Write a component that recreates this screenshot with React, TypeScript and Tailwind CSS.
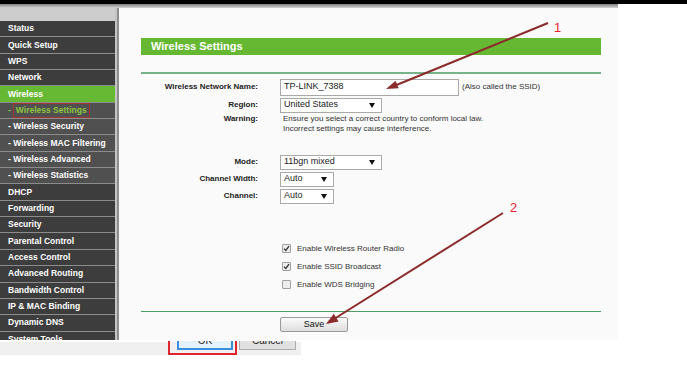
import React from 'react';

type NavKind = 'main' | 'sub' | 'active' | 'current';

const navItems: { label: string; kind: NavKind }[] = [
    { label: 'Status', kind: 'main' },
    { label: 'Quick Setup', kind: 'main' },
    { label: 'WPS', kind: 'main' },
    { label: 'Network', kind: 'main' },
    { label: 'Wireless', kind: 'active' },
    { label: 'Wireless Settings', kind: 'current' },
    { label: '- Wireless Security', kind: 'sub' },
    { label: '- Wireless MAC Filtering', kind: 'sub' },
    { label: '- Wireless Advanced', kind: 'sub' },
    { label: '- Wireless Statistics', kind: 'sub' },
    { label: 'DHCP', kind: 'main' },
    { label: 'Forwarding', kind: 'main' },
    { label: 'Security', kind: 'main' },
    { label: 'Parental Control', kind: 'main' },
    { label: 'Access Control', kind: 'main' },
    { label: 'Advanced Routing', kind: 'main' },
    { label: 'Bandwidth Control', kind: 'main' },
    { label: 'IP & MAC Binding', kind: 'main' },
    { label: 'Dynamic DNS', kind: 'main' },
    { label: 'System Tools', kind: 'main' },
];

const rowBg: Record<NavKind, string> = {
    main: 'bg-[#3d3d3d]',
    sub: 'bg-[#505050]',
    active: 'bg-[#67b934]',
    current: 'bg-[#505050]',
};

// Fake select box (native select renders differently in headless chrome)
const SelectBox = ({ value, width }: { value: string; width: string }) => (
    <div className={`${width} h-[15px] bg-white border border-[#a9a9a9] flex items-center justify-between pl-[3px] pr-[6px]`}>
        <span className="text-[9px] text-[#222]">{value}</span>
        <svg width="6" height="5" viewBox="0 0 6 5">
            <polygon points="0,0 6,0 3,5" fill="#111" />
        </svg>
    </div>
);

const Checkbox = ({ checked }: { checked: boolean }) => (
    <div className="w-[9px] h-[9px] border border-[#a0a0a0] bg-[#ececec] rounded-[1px] flex items-center justify-center">
        {checked && (
            <svg width="7" height="7" viewBox="0 0 7 7">
                <path d="M1 3.6 L2.8 5.4 L6 1.2" stroke="#333" strokeWidth="1.3" fill="none" />
            </svg>
        )}
    </div>
);

const FormRow = ({ label, height, children }: { label: string; height: string; children: React.ReactNode }) => (
    <div className={`flex items-center ${height}`}>
        <div className="w-[117px] text-right text-[8px] font-bold text-[#222]">{label}</div>
        <div className="ml-[22px] flex items-center">{children}</div>
    </div>
);

export default function App() {
    return (
        <div className="relative w-[687px] h-[390px] overflow-hidden bg-white font-['Liberation_Sans',Arial,sans-serif]">
            {/* Top bars */}
            <div className="h-[4px] bg-black" />
            <div className="w-[618px] h-[4px] bg-gradient-to-b from-[#808080] to-[#d4d4d4]" />

            <div className="flex h-[332px]">
                {/* Sidebar */}
                <div className="w-[115px] flex flex-col overflow-hidden bg-[#cfcfcf]">
                    <div className="h-[13px] shrink-0 bg-[#cdcdcd]" />
                    {navItems.map(item => (
                        <div
                            key={item.label}
                            className={`h-[16.35px] shrink-0 flex items-center pl-[8px] border-b border-[#8c8c8c] text-[8.5px] font-bold ${rowBg[item.kind]} ${item.kind === 'current' ? 'text-[#8cc63f]' : 'text-white'}`}
                        >
                            {item.kind === 'current' ? (
                                <>
                                    <span>-</span>
                                    <span className="ml-[2px] h-[15px] px-[2px] flex items-center border border-[#a33535]">{item.label}</span>
                                </>
                            ) : (
                                item.label
                            )}
                        </div>
                    ))}
                </div>
                <div className="w-[2px] bg-[#c4c4c4]" />
                <div className="w-[2px] bg-[#8e8e8e]" />

                {/* Content */}
                <div className="w-[499px] bg-[#fafafa] pl-[22px] pt-[30px]">
                    <div className="w-[460px]">
                        <div className="h-[17px] bg-[#66b832] flex items-center pl-[10px] text-[11px] font-bold text-white">
                            Wireless Settings
                        </div>
                        <div className="mt-[17px] h-[1.5px] bg-[#75b38b]" />

                        <div className="mt-[5px]">
                            <FormRow label="Wireless Network Name:" height="h-[17px]">
                                <div className="w-[179px] h-[17px] bg-white border border-[#a9a9a9] flex items-center pl-[3px] text-[9px] text-[#222]">
                                    TP-LINK_7388
                                </div>
                                <span className="ml-[3px] text-[8px] text-[#333]">(Also called the SSID)</span>
                            </FormRow>
                            <div className="mt-[2px]">
                                <FormRow label="Region:" height="h-[15px]">
                                    <SelectBox value="United States" width="w-[102px]" />
                                </FormRow>
                            </div>
                            <div className="flex mt-[1px] leading-[10px]">
                                <div className="w-[117px] text-right text-[8px] font-bold text-[#222]">Warning:</div>
                                <div className="ml-[25px] text-[8px] text-[#333]">
                                    <div>Ensure you select a correct country to conform local law.</div>
                                    <div>Incorrect settings may cause interference.</div>
                                </div>
                            </div>

                            <div className="mt-[21px] flex flex-col gap-[2px]">
                                <FormRow label="Mode:" height="h-[15px]">
                                    <SelectBox value="11bgn mixed" width="w-[102px]" />
                                </FormRow>
                                <FormRow label="Channel Width:" height="h-[15px]">
                                    <SelectBox value="Auto" width="w-[54px]" />
                                </FormRow>
                                <FormRow label="Channel:" height="h-[15px]">
                                    <SelectBox value="Auto" width="w-[54px]" />
                                </FormRow>
                            </div>

                            <div className="mt-[36px] pl-[141px] flex flex-col">
                                {[
                                    { label: 'Enable Wireless Router Radio', checked: true },
                                    { label: 'Enable SSID Broadcast', checked: true },
                                    { label: 'Enable WDS Bridging', checked: false },
                                ].map(c => (
                                    <div key={c.label} className="h-[18px] flex items-center gap-[6px]">
                                        <Checkbox checked={c.checked} />
                                        <span className="text-[8px] text-[#333]">{c.label}</span>
                                    </div>
                                ))}
                            </div>
                        </div>

                        <div className="mt-[17px] h-[1.5px] bg-[#4f9c68]" />
                        <div className="mt-[5px] pl-[139px]">
                            <div className="w-[68px] h-[15px] rounded-[2px] border border-[#9a9a9a] bg-gradient-to-b from-[#fbfbfb] to-[#dedede] flex items-center justify-center text-[9px] text-[#111]">
                                Save
                            </div>
                        </div>
                    </div>
                </div>
            </div>

            {/* Dialog buttons strip (cropped) */}
            <div className="mt-[2px] w-[301px] h-[13px] bg-[#f0f0f0] flex items-start">
                <div className="ml-[177px] -mt-[1px] w-[56px] h-[9px] border-2 border-t-0 border-[#3a8ee0] bg-[#e5f1fb] overflow-hidden flex justify-center">
                    <span className="-mt-[5px] text-[10px] leading-[10px] text-[#222]">OK</span>
                </div>
                <div className="ml-[6px] -mt-[1px] w-[57px] h-[9px] border border-t-0 border-[#adadad] bg-[#e1e1e1] overflow-hidden flex justify-center">
                    <span className="-mt-[5px] text-[10px] leading-[10px] text-[#222]">Cancel</span>
                </div>
            </div>

            {/* Annotations */}
            <div className="absolute left-[168px] top-[341px] w-[69px] h-[14px] border-2 border-t-0 border-[#e0262b]" />
            <svg className="absolute left-0 top-0 pointer-events-none" width="687" height="390" viewBox="0 0 687 390">
                <line x1="548" y1="23" x2="394" y2="86" stroke="#8b2b2b" strokeWidth="2" />
                <polygon points="386,89 398.6,88.2 395.6,80.8" fill="#8b2b2b" />
                <line x1="503" y1="213" x2="334" y2="319" stroke="#8b2b2b" strokeWidth="2" />
                <polygon points="326,324 338.6,321.4 333.8,313.8" fill="#8b2b2b" />
            </svg>
            <span className="absolute left-[554px] top-[18px] text-[13px] text-[#e8262b]">1</span>
            <span className="absolute left-[510px] top-[198px] text-[13px] text-[#e8262b]">2</span>
        </div>
    );
}
